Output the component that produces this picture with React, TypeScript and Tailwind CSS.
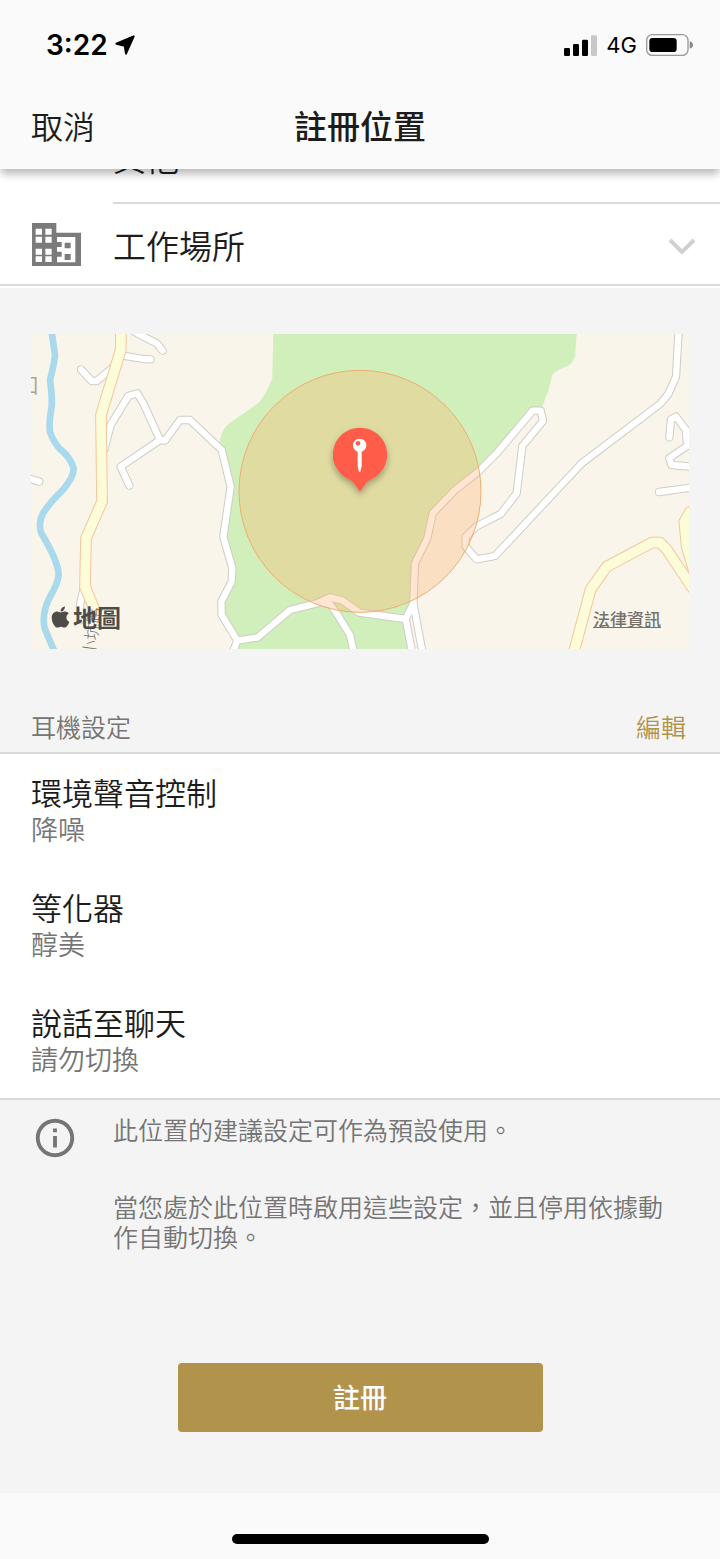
import React, { useState } from 'react';
import { FaApple } from 'react-icons/fa';

const SETTINGS = [
  { id: 'ambient', title: '環境聲音控制', value: '降噪' },
  { id: 'equalizer', title: '等化器', value: '醇美' },
  { id: 'speak', title: '說話至聊天', value: '請勿切換' },
];

const RIVER =
  'M155 36 Q160 70 165 105 Q164 125 150 180 Q157 230 155 260 Q146 310 150 335 Q158 362 178 385 Q212 412 221 445 Q222 470 190 508 Q145 552 128 582 Q114 610 124 640 Q175 725 176 765 Q174 790 150 830 Q124 880 134 925 L164 996';

const WOODS =
  'M820 30 L817 175 Q800 220 778 247 L685 312 Q662 330 658 380 L668 400 L692 500 L670 650 L697 745 L695 785 L664 845 L665 885 L712 960 L700 1000 L1237 1000 L1217 895 L1237 840 L1245 730 L1282 655 L1298 580 L1365 510 L1435 455 L1490 400 L1600 272 L1622 272 L1646 210 L1656 168 Q1662 154 1690 143 Q1715 136 1725 110 L1731 30 Z';

const ROADS = [
  'M395 30 L425 47 L470 70 L488 92',
  'M365 106 L430 117 L452 118',
  'M243 148 L275 183 L290 183 L345 137',
  'M313 388 L332 315 L385 228 L412 220 L430 250 L480 360',
  'M388 497 L362 440 L480 360 L495 362 L540 300 L570 300 L665 390 L692 500 L670 650 L697 745 L695 785 L664 845 L665 885 L712 962 L697 1000',
  'M712 962 L773 952 L870 870 L950 850 L990 832 L1028 842 L1078 878 L1217 897',
  'M965 848 L990 852 L1010 880 L1050 945 L1062 1000',
  'M1270 1010 L1240 850 L1245 730 L1282 655 L1298 580 L1365 510 L1435 455 L1490 400 L1598 272 L1622 272 L1629 303 L1567 378 L1550 520 L1502 582 L1428 620 L1397 650 L1397 680 L1430 718 L1485 708 L1745 430 L1980 252 L2005 222 L2028 170 L2036 30',
  'M1240 850 L1217 897 L1239 1010',
  'M2008 352 L2013 298 L2028 290 L2058 330 L2060 365 L2080 385',
  'M2085 362 L2008 414 L2014 435 L2085 441',
  'M1977 516 L2085 501',
  'M80 473 L118 485',
  'M252 800 L240 855 L242 900',
];

const MAIN_ROADS = [
  'M363 20 L362 90 L303 285 L306 545 L258 655 L255 800 L286 875',
  'M1718 1010 L1772 808 L1820 740 L1955 668 L1980 668 L2000 688 L2085 815',
  'M2100 558 L2070 576 L2053 605 L2060 680 L2090 780',
];

function StatusBar() {
  return (
    <div className="flex h-[88px] items-center justify-between pl-[46px] pr-[27px] pt-0.5 font-[Inter,sans-serif] text-black">
      <div className="flex items-center gap-[7px]">
        <span className="text-[28px] font-semibold leading-8">3:22</span>
        <svg className="h-5 w-5" viewBox="0 0 60 60" strokeLinejoin="round" aria-hidden="true">
          <path d="M56 4 L33 56 L29 32 L4 26 Z" stroke="#000" strokeWidth="6" />
        </svg>
      </div>
      <div className="flex items-center gap-[9px]">
        <svg className="h-[21px] w-[33px]" viewBox="0 0 99 63" aria-hidden="true">
          <rect x="0" y="39" width="18" height="24" rx="4" />
          <rect x="27" y="27" width="18" height="36" rx="4" />
          <rect x="54" y="14" width="18" height="49" rx="4" />
          <rect x="81" y="1" width="18" height="62" rx="4" fill="#c8c8c8" />
        </svg>
        <span className="text-[22px] font-normal leading-8">4G</span>
        <svg className="h-[22px] w-[47px]" viewBox="0 0 141 66" aria-hidden="true">
          <rect x="2" y="2" width="124" height="62" rx="17" fill="none" stroke="#999" strokeWidth="4" />
          <rect x="10" y="12" width="82" height="42" rx="10" />
          <path d="M131 22 Q141 25 141 33 Q141 41 131 44 Z" fill="#8a8a8a" />
        </svg>
      </div>
    </div>
  );
}

function BuildingIcon() {
  return (
    <svg className="h-[43px] w-[49px]" viewBox="0 0 147 129" aria-hidden="true">
      <path fill="#7b7b7b" d="M0 0H73V29H147V129H0Z" />
      <path
        fill="#fff"
        d="M11 17h19v18H11zM40 17h19v18H40zM11 41h19v18H11zM40 41h19v18H40zM11 77h19v18H11zM40 77h19v18H40zM11 100h19v17H11zM40 100h19v17H40zM75 42H130V118H75V101H89V86H75V72H89V57H75Z"
      />
      <path fill="#7b7b7b" d="M98 59h18v17H98zM98 93h18v18H98z" />
    </svg>
  );
}

function MapView() {
  return (
    <div className="relative mx-[31px] h-[315px] overflow-hidden bg-[#f9f5ea]">
      <svg
        className="h-full w-full"
        viewBox="93 42 1974 945"
        preserveAspectRatio="xMidYMid slice"
        fill="none"
        strokeLinejoin="round"
        aria-hidden="true"
      >
        <defs>
          <filter id="pinShadow" x="-30%" y="-30%" width="160%" height="170%">
            <feDropShadow dx="0" dy="10" stdDeviation="9" floodColor="#000" floodOpacity="0.3" />
          </filter>
        </defs>
        <path d={WOODS} fill="#d1efba" />
        <path d={RIVER} stroke="#a8d9ec" strokeWidth="20" />
        <g strokeLinecap="round">
          {ROADS.map((d) => (
            <path key={d} d={d} stroke="#cfccc8" strokeWidth="25" />
          ))}
          {ROADS.map((d) => (
            <path key={d} d={d} stroke="#fff" strokeWidth="19" />
          ))}
        </g>
        {MAIN_ROADS.map((d) => (
          <path key={d} d={d} stroke="#f2c79c" strokeWidth="35" />
        ))}
        {MAIN_ROADS.map((d) => (
          <path key={d} d={d} stroke="#fdfcd8" strokeWidth="29" />
        ))}
        <text x="118" y="218" textAnchor="end" fontSize="66" fill="#aaa59c">口</text>
        <text x="0" y="0" fontSize="50" fontWeight="300" fill="#77736c" transform="translate(284 1012) rotate(-82)">小坑路</text>

        <circle cx="1080" cy="514" r="363" fill="#feac67" fillOpacity="0.3" stroke="#f0ae70" strokeWidth="3" />
        <path
          d="M1080 323a81 81 0 0 1 31 156Q1098 486 1090 501L1080 516L1070 501Q1062 486 1049 479A81 81 0 0 1 1080 323Z"
          fill="#ff5b49"
          filter="url(#pinShadow)"
        />
        <circle cx="1079" cy="376" r="20" fill="#fff" />
        <circle cx="1074" cy="370" r="7" fill="#ff5b49" />
        <path d="M1073 392H1085V438L1081 455H1077L1073 438Z" fill="#fff" />
      </svg>
      <div className="absolute bottom-[14px] left-[19px] flex items-center gap-0.5 text-[#4d4c49]">
        <FaApple className="h-6 w-[21px]" aria-hidden="true" />
        <span className="text-2xl font-bold leading-9">地圖</span>
      </div>
      <a href="#legal" className="absolute bottom-[18px] right-7 text-[17px] font-medium leading-6 text-[#74726d] underline">
        法律資訊
      </a>
    </div>
  );
}

export default function App() {
  const [isOpen, setIsOpen] = useState(false);

  return (
    <div className="bg-[#f4f4f4] font-['Noto_Sans_CJK_TC',sans-serif] font-[350] text-[#1c1c1c]">
      <header className="relative z-10 bg-[#fafafa] shadow-[0_6px_8px_-1px_rgba(0,0,0,0.28)]">
        <StatusBar />
        <div className="grid h-[81px] grid-cols-3 items-center px-[31px] pb-2 text-[33px] leading-10">
          <button type="button" className="justify-self-start text-[32px] leading-10">取消</button>
          <h1 className="justify-self-center whitespace-nowrap font-medium">註冊位置</h1>
        </div>
      </header>

      <main>
        {/* Location type, partly scrolled under the header */}
        <section className="-mt-[57px] bg-white pb-0.5">
          <div className="ml-[113px] flex h-[92px] items-center border-b-2 border-[#dadada] text-[33px] leading-10">
            其他
          </div>
          <button
            type="button"
            aria-expanded={isOpen}
            onClick={() => setIsOpen(!isOpen)}
            className="flex h-[82px] w-full items-center border-b-2 border-[#dadada] pl-8 pr-6 text-left text-[33px] leading-10"
          >
            <BuildingIcon />
            <span className="ml-8 flex-1 pt-0.5">工作場所</span>
            <svg className="h-6 w-7" viewBox="0 0 28 24" fill="none" aria-hidden="true">
              <path d="M2 8 L14 20 L26 8" stroke="#d0d0d2" strokeWidth="4" />
            </svg>
          </button>
        </section>

        <div className="pt-[46px]">
          <MapView />
        </div>

        <section>
          <div className="flex items-center justify-between pb-2 pl-[31px] pr-[34px] pt-[59px] text-[25px] leading-9">
            <h2 className="text-[#757575]">耳機設定</h2>
            <button type="button" className="text-[#b2934b]">編輯</button>
          </div>
          <ul className="flex flex-col gap-[41px] border-y-2 border-[#dadada] bg-white px-[31px] pb-[21px] pt-[19px]">
            {SETTINGS.map((setting) => (
              <li key={setting.id}>
                <h3 className="text-[31px] leading-[38px]">{setting.title}</h3>
                <p className="text-[27px] leading-9 text-[#757575]">{setting.value}</p>
              </li>
            ))}
          </ul>
        </section>

        <section className="flex gap-[35px] pl-8 pr-10 pt-[14px] text-[25px] leading-[30px] text-[#757575]">
          <svg className="h-12 w-[46px] shrink-0" viewBox="0 0 24 24" fill="#757575" aria-hidden="true">
            <path d="M11 7h2v2h-2zm0 4h2v6h-2zm1-9C6.48 2 2 6.48 2 12s4.48 10 10 10 10-4.48 10-10S17.52 2 12 2zm0 18c-4.41 0-8-3.59-8-8s3.59-8 8-8 8 3.59 8 8-3.59 8-8 8z" />
          </svg>
          <div className="flex flex-col gap-[47px]">
            <p>此位置的建議設定可作為預設使用。</p>
            <p>當您處於此位置時啟用這些設定，並且停用依據動作自動切換。</p>
          </div>
        </section>

        <div className="flex justify-center pb-[61px] pt-28">
          <button type="button" className="h-[69px] w-[365px] rounded bg-[#b2934b] pb-0.5 text-[27px] font-medium leading-9 text-white">
            註冊
          </button>
        </div>
      </main>

      <footer className="flex justify-center bg-[#fafafa] pb-[15px] pt-[41px]">
        <div className="h-[10px] w-[257px] rounded-full bg-black" />
      </footer>
    </div>
  );
}
